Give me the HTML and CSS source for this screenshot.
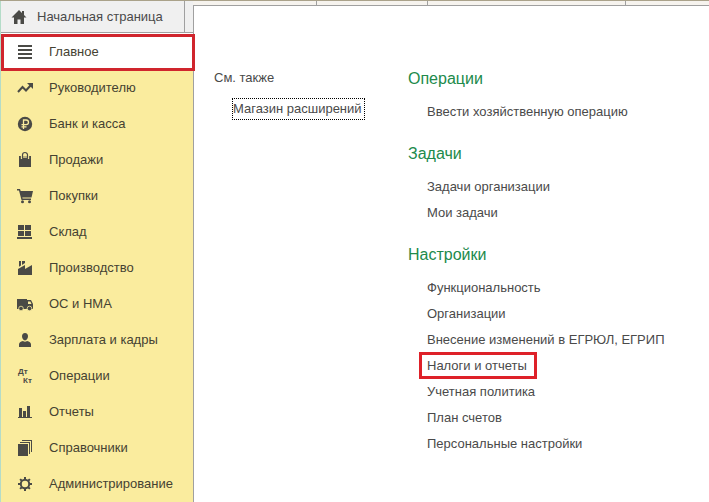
FILE: index.html
```html
<!DOCTYPE html>
<html lang="ru">
<head>
<meta charset="utf-8">
<title>Главное</title>
<link rel="stylesheet" href="styles.css">
</head>
<body>
<div class="app">
  <aside class="side">
    <header class="tabbar">
      <a class="home" href="#">
        <svg class="icon" viewBox="0 0 16 16"><path d="M8 1 .5 8.500H3V15h3.500v-4.500h3V15H13V8.500h2.500L13 6V2h-2v2z"/></svg>
        Начальная страница
      </a>
    </header>
    <nav class="nav">
      <a class="item active" href="#"><svg class="icon" viewBox="0 0 16 16"><path d="M1 1h14v2H1zM1 5h14v2H1zM1 9h14v2H1zM1 13h14v2H1z"/></svg>Главное</a>
      <a class="item" href="#"><svg class="icon" viewBox="0 0 16 16"><path class="line" d="M1 12 5.500 7 9 10.500 14 5"/><path d="M10 3h6v6z"/></svg>Руководителю</a>
      <a class="item" href="#"><svg class="icon" viewBox="0 0 16 16"><circle cx="8" cy="8" r="7.200"/><path class="cut" d="M6.500 13V4h2.700a2.300 2.300 0 0 1 0 4.600H4.500M4.500 10.800h5"/></svg>Банк и касса</a>
      <a class="item" href="#"><svg class="icon" viewBox="0 0 16 16"><path d="M2 4h12v11H2z"/><path class="cut" d="M4.500 7V4M11.500 7V4M7 4v2M9 4v2"/><path class="thin" d="M5.500 6.500V3a2.500 2.500 0 0 1 5 0v3.500"/></svg>Продажи</a>
      <a class="item" href="#"><svg class="icon" viewBox="0 0 16 16"><path d="M0 1h3l.7 2H16l-1.500 6.500H5.300l.3 1H14V12H4.500L2 2.500H0z"/><circle cx="5.500" cy="13.700" r="1.500"/><circle cx="12.500" cy="13.700" r="1.500"/></svg>Покупки</a>
      <a class="item" href="#"><svg class="icon" viewBox="0 0 16 16"><path d="M1 1h6v5H1zM8 1h6v5H8zM1 7h6v5H1zM8 7h6v5H8zM0 13h15v2H0z"/></svg>Склад</a>
      <a class="item" href="#"><svg class="icon" viewBox="0 0 16 16"><path d="M1 15V9l7-4v4l7-4v10zM2 1h2v4.500L2 6.700zM5 1h3v2L5 5z"/></svg>Производство</a>
      <a class="item" href="#"><svg class="icon" viewBox="0 0 16 16"><path fill-rule="evenodd" d="M0 3h10v1h4l2 4v5H0zM11 5.500V8h3.500l-1.200-2.500z"/><circle class="wheel" cx="4" cy="12.500" r="2.300"/><circle class="wheel" cx="12.500" cy="12.500" r="2.300"/></svg>ОС и НМА</a>
      <a class="item" href="#"><svg class="icon" viewBox="0 0 16 16"><path d="M8 1c2 0 3 1.300 3 3.300S9.700 8.500 8 8.500 5 6.300 5 4.300 6 1 8 1zM2 15v-2.500c0-2 1.500-3 4-3.500 1 1 3 1 4 0 2.500.5 4 1.500 4 3.500V15z"/></svg>Зарплата и кадры</a>
      <a class="item" href="#"><svg class="icon" viewBox="0 0 16 16"><text x="1" y="6">Дт</text><text x="6" y="15">Кт</text></svg>Операции</a>
      <a class="item" href="#"><svg class="icon" viewBox="0 0 16 16"><path d="M2 4h3v9h1V7h3v6h1V2h3v11h2v1H1v-1h1z"/></svg>Отчеты</a>
      <a class="item" href="#"><svg class="icon" viewBox="0 0 16 16"><path d="M1 4h10v12H1zM3 2h10v12h-1V3H3zM5 0h10v12h-1V1H5z"/></svg>Справочники</a>
      <a class="item" href="#"><svg class="icon" viewBox="0 0 16 16"><circle class="ring" cx="8" cy="8" r="4.200"/><path class="teeth" d="M8 1v2.500M8 12.500V15M1 8h2.500M12.500 8H15M3.100 3.100l1.700 1.700M11.200 11.200l1.700 1.700M3.100 12.900l1.700-1.700M11.200 4.800l1.700-1.700"/></svg>Администрирование</a>
    </nav>
  </aside>
  <div class="work">
    <div class="strip"><span></span><span></span><span></span><span></span></div>
    <main class="panel">
      <section class="also">
        <h2>См. также</h2>
        <a class="focused" href="#">Магазин расширений</a>
      </section>
      <div class="groups">
        <section class="group">
          <h2>Операции</h2>
          <ul>
            <li><a href="#">Ввести хозяйственную операцию</a></li>
          </ul>
        </section>
        <section class="group">
          <h2>Задачи</h2>
          <ul>
            <li><a href="#">Задачи организации</a></li>
            <li><a href="#">Мои задачи</a></li>
          </ul>
        </section>
        <section class="group">
          <h2>Настройки</h2>
          <ul>
            <li><a href="#">Функциональность</a></li>
            <li><a href="#">Организации</a></li>
            <li><a href="#">Внесение изменений в ЕГРЮЛ, ЕГРИП</a></li>
            <li><a class="marked" href="#">Налоги и отчеты</a></li>
            <li><a href="#">Учетная политика</a></li>
            <li><a href="#">План счетов</a></li>
            <li><a href="#">Персональные настройки</a></li>
          </ul>
        </section>
      </div>
    </main>
  </div>
</div>
</body>
</html>
```
FILE: styles.css
```css
* {
  box-sizing: border-box;
}

body {
  margin: 0;
  font: 13px/26px "Liberation Sans", Arial, sans-serif;
  color: #4a4a4a;
  background: #fff;
}

a {
  color: inherit;
  text-decoration: none;
}

h2,
ul {
  margin: 0;
  padding: 0;
  font-weight: normal;
  list-style: none;
}

.app {
  display: grid;
  grid-template-columns: 193px 1fr;
  min-height: 100vh;
  border-top: 1px solid #aaa28a;
}

.side {
  display: flex;
  flex-direction: column;
  border-left: 1px solid #b4dcc8;
  background: #faec9e;
}

.tabbar {
  display: flex;
  height: 32px;
  padding-right: 8px;
  background: #f0f0f0;
  border-bottom: 1px solid #a0a0a0;
}

.home {
  flex: 1;
  display: flex;
  align-items: center;
  gap: 10px;
  padding-left: 10px;
  border-right: 1px solid #a0a0a0;
}

.icon {
  flex: none;
  width: 16px;
  height: 16px;
  overflow: visible;
  fill: #4a4a46;
}

.item {
  position: relative;
  display: flex;
  align-items: center;
  gap: 16px;
  height: 36px;
  padding: 2px 0 0 16px;
  color: #454232;
}

.active {
  background: #fff;
}

.active::after {
  content: "";
  position: absolute;
  inset: 1px -2px -2px 0;
  z-index: 1;
  border: 3px solid #d0252d;
}

.icon .line,
.icon .thin,
.icon .cut,
.icon .ring,
.icon .teeth {
  fill: none;
  stroke: #4a4a46;
  stroke-width: 2;
}

.icon .thin {
  stroke-width: 1.2;
}

.icon .cut {
  stroke: #faec9e;
  stroke-width: 1.3;
}

.icon .wheel {
  stroke: #faec9e;
  stroke-width: 0.8;
}

.icon text {
  font: bold 8px "Liberation Sans", Arial, sans-serif;
}

.work {
  display: flex;
  flex-direction: column;
  background: #f6f3ee;
}

.strip {
  display: grid;
  grid-template-columns: 123fr 111fr 198fr 84fr;
  height: 4px;
}

.strip span + span {
  border-left: 1px solid #a0a0a0;
}

.panel {
  flex: 1;
  display: grid;
  grid-template-columns: 194px 1fr;
  padding: 61px 20px 20px;
  background: #fff;
  border-top: 1px solid #a0a0a0;
  border-left: 1px solid #a0a0a0;
}

.also h2 {
  font-size: 13px;
  line-height: 22px;
}

.focused {
  display: inline-block;
  margin: 9px 0 0 18px;
  padding-right: 2px;
  line-height: 20px;
  border: 1px dotted #000;
}

.groups {
  display: flex;
  flex-direction: column;
  gap: 17px;
}

.group h2 {
  margin-bottom: 8px;
  font-size: 16px;
  line-height: 24px;
  color: #218a4b;
}

.group ul {
  padding-left: 19px;
}

.group li {
  height: 26px;
}

.marked {
  position: relative;
}

.marked::after {
  content: "";
  position: absolute;
  inset: -6px -10px -6px -8px;
  border: 3px solid #de2129;
}
```
